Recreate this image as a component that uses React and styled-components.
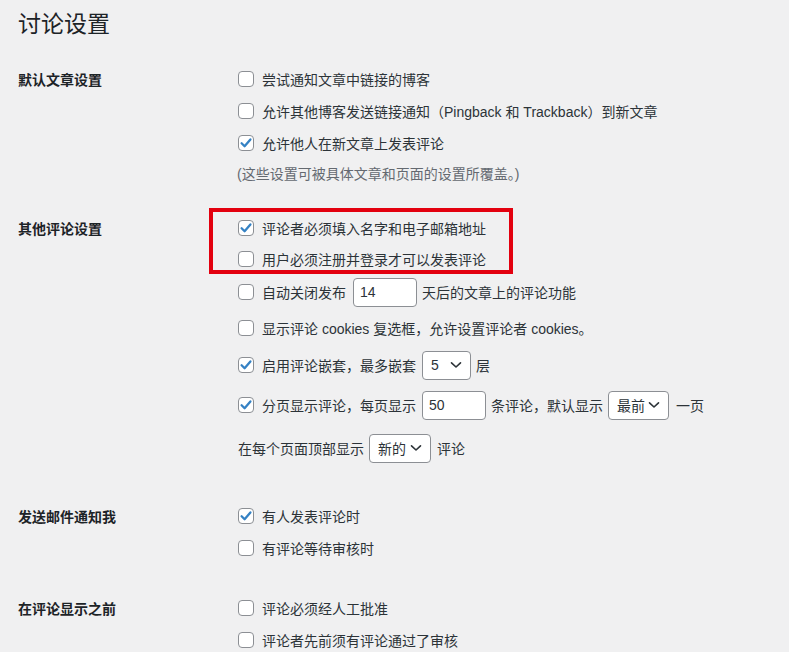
import React from "react";
import styled, { createGlobalStyle } from "styled-components";

const GlobalStyle = createGlobalStyle`
  html, body { margin: 0; padding: 0; background: #f0f0f1; }
  body {
    font-family: "Liberation Sans", "Noto Sans CJK SC", sans-serif;
    font-size: 14px;
    color: #2c3338;
  }
`;

const Page = styled.div`
  padding: 9px 0 0 18px;
  width: 789px;
  height: 652px;
  box-sizing: border-box;
  overflow: hidden;
`;

const Title = styled.h1`
  margin: 0;
  font-size: 23px;
  font-weight: 400;
  line-height: 30px;
  height: 30px;
  color: #1d2327;
`;

const Section = styled.div`
  display: grid;
  grid-template-columns: 220px 1fr;
  margin-top: ${(p) => p.$mt}px;
`;

const Heading = styled.div`
  height: 32px;
  display: flex;
  align-items: center;
  font-weight: 700;
  color: #1d2327;
`;

const Options = styled.div`
  display: flex;
  flex-direction: column;
`;

const Row = styled.div`
  display: flex;
  align-items: center;
  height: ${(p) => p.$h || 32}px;
  white-space: nowrap;
`;

const Note = styled.div`
  display: flex;
  align-items: center;
  height: 27px;
  color: #646970;
  margin-left: -1px;
`;

const Highlight = styled.div`
  position: relative;
  &::before {
    content: "";
    position: absolute;
    left: -29px;
    top: -4px;
    width: 304px;
    height: 66px;
    box-sizing: border-box;
    border: 4px solid #e3000f;
    pointer-events: none;
  }
`;

const Box = styled.span`
  flex: none;
  width: 16px;
  height: 16px;
  box-sizing: border-box;
  border: 1px solid #8c8f94;
  border-radius: 4px;
  background: #fff;
  margin-right: 8px;
  display: inline-flex;
  align-items: center;
  justify-content: center;
`;

const Checkbox = ({ checked }) => (
  <Box>
    {checked && (
      <svg width="14" height="14" viewBox="0 0 14 14">
        <path
          d="M2.6 7.2 L5.6 10.2 L11.4 3.4"
          fill="none"
          stroke="#3582c4"
          strokeWidth="2.3"
          strokeLinecap="round"
          strokeLinejoin="round"
        />
      </svg>
    )}
  </Box>
);

const TextInput = styled.input`
  width: 64px;
  height: 29px;
  box-sizing: border-box;
  border: 1px solid #8c8f94;
  border-radius: 4px;
  background: #fff;
  padding: 0 6px;
  margin: 0 ${(p) => p.$mr ?? 5}px 0 ${(p) => p.$ml ?? 6}px;
  font: inherit;
  font-size: 14px;
  color: #2c3338;
  outline: none;
`;

const SelectBox = styled.div`
  display: inline-flex;
  align-items: center;
  justify-content: space-between;
  width: ${(p) => p.$w}px;
  height: 29px;
  box-sizing: border-box;
  border: 1px solid #8c8f94;
  border-radius: 4px;
  background: #fff;
  padding: 0 8px 0 8px;
  margin: 0 ${(p) => p.$mr ?? 5}px 0 ${(p) => p.$ml ?? 6}px;
  color: #2c3338;
`;

const Chevron = () => (
  <svg width="12" height="8" viewBox="0 0 12 8">
    <path
      d="M1.5 1.8 L6 6 L10.5 1.8"
      fill="none"
      stroke="#2c3338"
      strokeWidth="1.6"
      strokeLinecap="round"
      strokeLinejoin="round"
    />
  </svg>
);

const Select = ({ value, w, ml, mr }) => (
  <SelectBox $w={w} $ml={ml} $mr={mr}>
    <span>{value}</span>
    <Chevron />
  </SelectBox>
);

export default function App() {
  return (
    <>
      <GlobalStyle />
      <Page>
        <Title>讨论设置</Title>

        <Section $mt={24}>
          <Heading>默认文章设置</Heading>
          <Options>
            <Row>
              <Checkbox />
              尝试通知文章中链接的博客
            </Row>
            <Row>
              <Checkbox />
              允许其他博客发送链接通知（Pingback 和 Trackback）到新文章
            </Row>
            <Row>
              <Checkbox checked />
              允许他人在新文章上发表评论
            </Row>
            <Note>(这些设置可被具体文章和页面的设置所覆盖。)</Note>
          </Options>
        </Section>

        <Section $mt={26}>
          <Heading>其他评论设置</Heading>
          <Options>
            <Highlight>
              <Row $h={31}>
                <Checkbox checked />
                评论者必须填入名字和电子邮箱地址
              </Row>
              <Row $h={32}>
                <Checkbox />
                用户必须注册并登录才可以发表评论
              </Row>
            </Highlight>
            <Row $h={34}>
              <Checkbox />
              自动关闭发布
              <TextInput defaultValue="14" $ml={7} $mr={5} />
              天后的文章上的评论功能
            </Row>
            <Row $h={37}>
              <Checkbox />
              显示评论 cookies 复选框，允许设置评论者 cookies。
            </Row>
            <Row $h={38}>
              <Checkbox checked />
              启用评论嵌套，最多嵌套
              <Select value="5" w={49} ml={6} mr={5} />层
            </Row>
            <Row $h={42}>
              <Checkbox checked />
              分页显示评论，每页显示
              <TextInput defaultValue="50" $ml={6} $mr={5} />
              条评论，默认显示
              <Select value="最前" w={61} ml={5} mr={7} />
              一页
            </Row>
            <Row $h={44}>
              在每个页面顶部显示
              <Select value="新的" w={62} ml={5} mr={6} />
              评论
            </Row>
          </Options>
        </Section>

        <Section $mt={30}>
          <Heading>发送邮件通知我</Heading>
          <Options>
            <Row>
              <Checkbox checked />
              有人发表评论时
            </Row>
            <Row $h={31}>
              <Checkbox />
              有评论等待审核时
            </Row>
          </Options>
        </Section>

        <Section $mt={29}>
          <Heading>在评论显示之前</Heading>
          <Options>
            <Row>
              <Checkbox />
              评论必须经人工批准
            </Row>
            <Row $h={31}>
              <Checkbox />
              评论者先前须有评论通过了审核
            </Row>
          </Options>
        </Section>
      </Page>
    </>
  );
}
